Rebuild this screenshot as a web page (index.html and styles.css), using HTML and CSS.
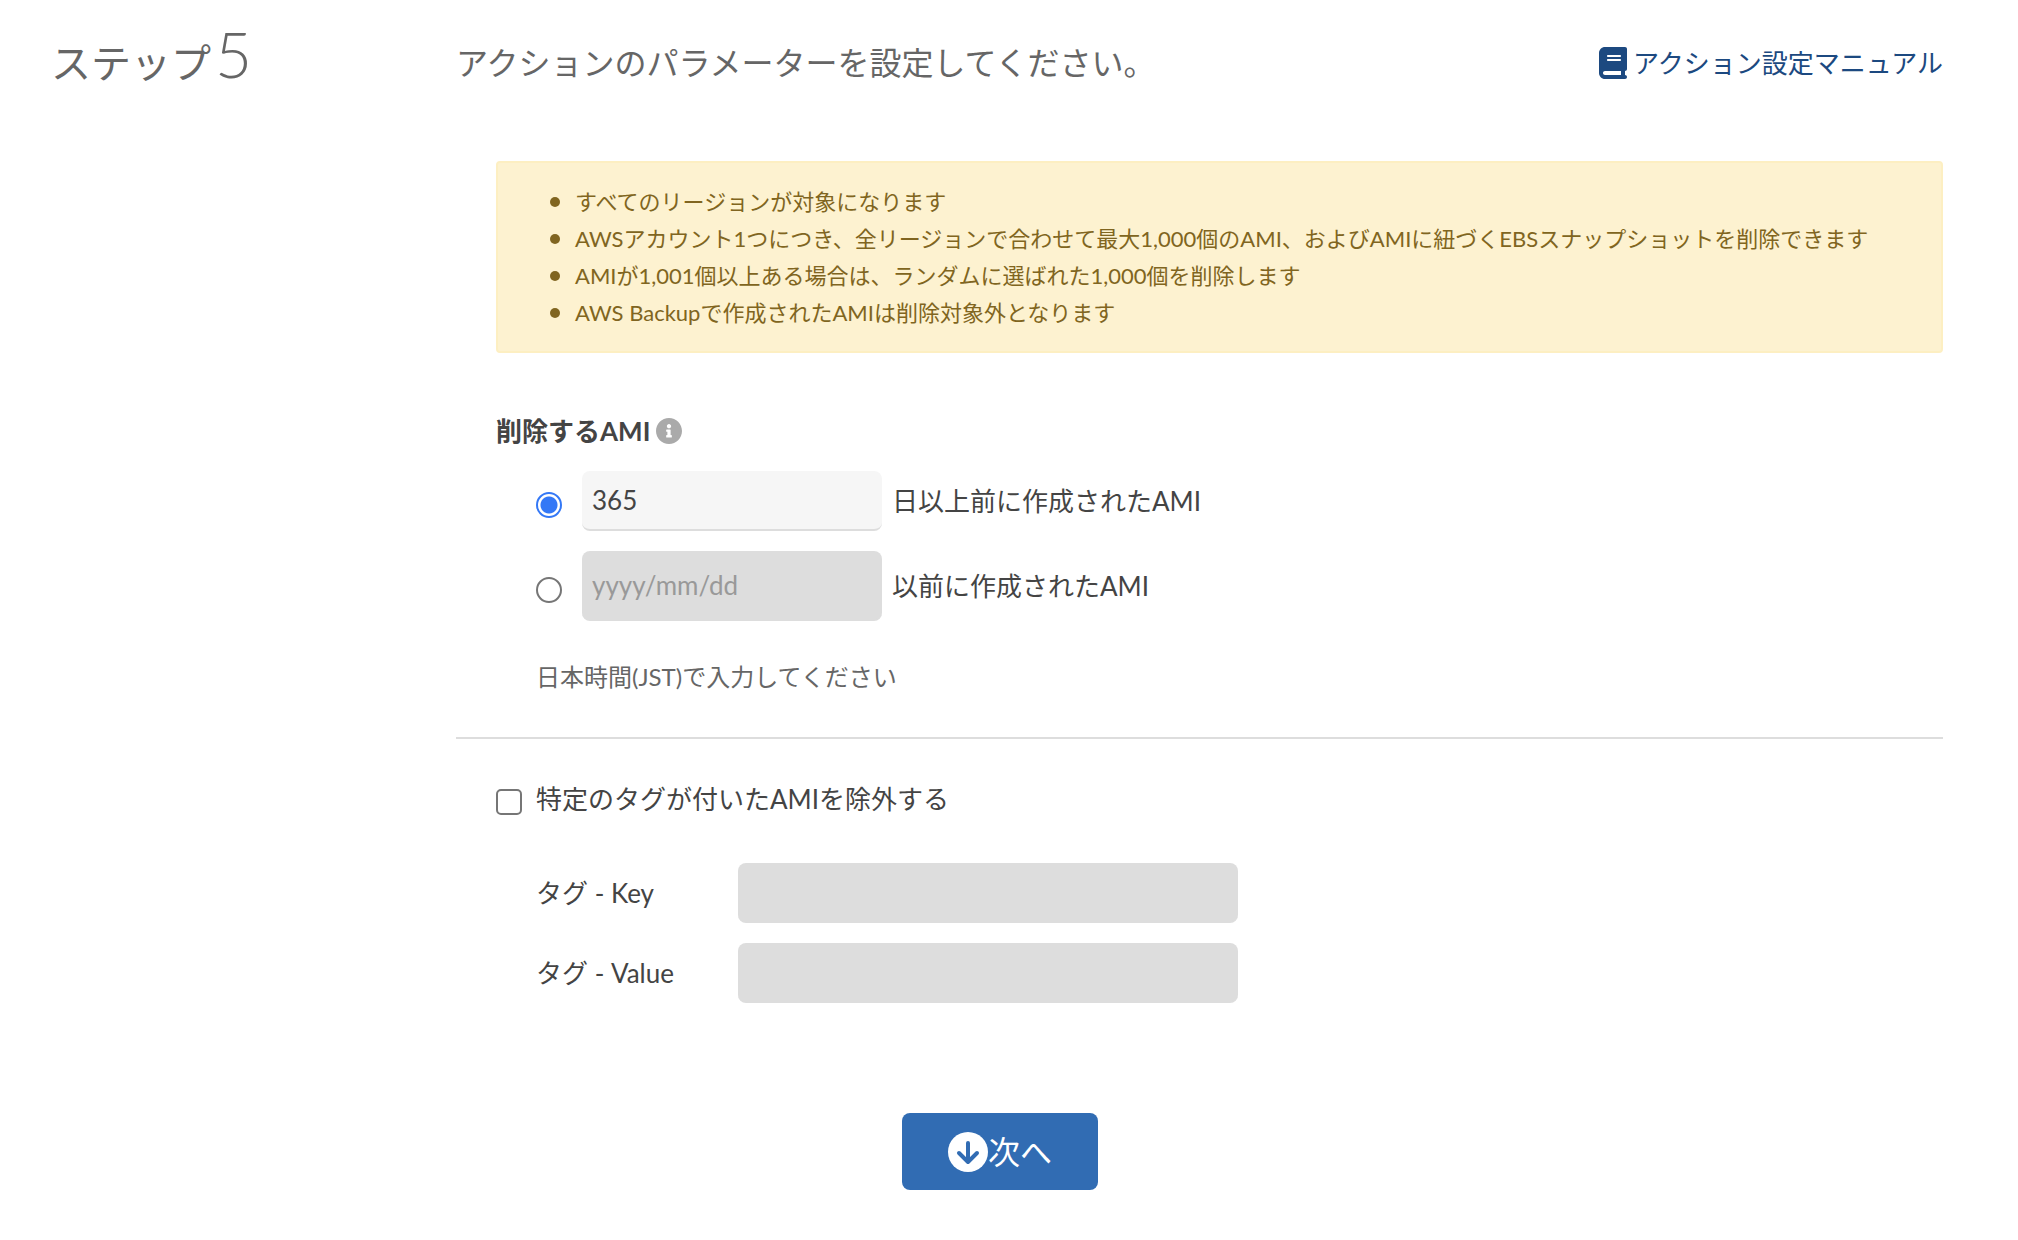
FILE: index.html
```html
<!DOCTYPE html>
<html lang="ja">
<head>
<meta charset="utf-8">
<title>アクション設定</title>
<link rel="stylesheet" href="styles.css">
</head>
<body>
<form class="step">
  <h2 class="step-name">ステップ<span class="step-number">5</span></h2>
  <section class="content">
    <header class="content-header">
      <h3 class="content-title">アクションのパラメーターを設定してください。</h3>
      <a class="manual-link" href="#">
        <svg class="book-icon" viewBox="0 0 448 512" aria-hidden="true"><path fill="currentColor" d="M96 0C43 0 0 43 0 96V416c0 53 43 96 96 96H416c18 0 32-14 32-32s-14-32-32-32V384c18 0 32-14 32-32V32c0-18-14-32-32-32H96zm0 384H352v64H96c-18 0-32-14-32-32s14-32 32-32zm32-240c0-9 7-16 16-16H336c9 0 16 7 16 16s-7 16-16 16H144c-9 0-16-7-16-16zm16 48H336c9 0 16 7 16 16s-7 16-16 16H144c-9 0-16-7-16-16s7-16 16-16z"/></svg>
        <span>アクション設定マニュアル</span>
      </a>
    </header>
    <ul class="notice">
      <li>すべてのリージョンが対象になります</li>
      <li>AWSアカウント1つにつき、全リージョンで合わせて最大1,000個のAMI、およびAMIに紐づくEBSスナップショットを削除できます</li>
      <li>AMIが1,001個以上ある場合は、ランダムに選ばれた1,000個を削除します</li>
      <li>AWS Backupで作成されたAMIは削除対象外となります</li>
    </ul>
    <div class="target">
      <h4 class="target-title">削除するAMI
        <svg class="info-icon" viewBox="0 0 512 512" aria-hidden="true"><path fill="currentColor" d="M256 0C115 0 0 115 0 256s115 256 256 256 256-115 256-256S397 0 256 0zm0 118c23 0 42 19 42 42s-19 42-42 42-42-19-42-42 19-42 42-42zm56 254c0 7-5 12-12 12h-88c-7 0-12-5-12-12v-24c0-7 5-12 12-12h12v-64h-12c-7 0-12-5-12-12v-24c0-7 5-12 12-12h64c7 0 12 5 12 12v100h12c7 0 12 5 12 12v24z"/></svg>
      </h4>
      <div class="option">
        <input class="check radio" type="radio" name="target" id="by-days" checked aria-label="日数で指定">
        <input class="field" type="text" id="days" value="365">
        <label for="days">日以上前に作成されたAMI</label>
      </div>
      <div class="option">
        <input class="check radio" type="radio" name="target" id="by-date" aria-label="日付で指定">
        <input class="field field-date" type="text" id="date" placeholder="yyyy/mm/dd" disabled>
        <label for="date">以前に作成されたAMI</label>
      </div>
      <p class="hint">日本時間(JST)で入力してください</p>
    </div>
    <hr class="divider">
    <div class="exclude">
      <div class="exclude-toggle">
        <input class="check checkbox" type="checkbox" id="exclude">
        <label for="exclude">特定のタグが付いたAMIを除外する</label>
      </div>
      <div class="tag-row">
        <label for="tag-key">タグ - Key</label>
        <input class="field" type="text" id="tag-key" disabled>
      </div>
      <div class="tag-row">
        <label for="tag-value">タグ - Value</label>
        <input class="field" type="text" id="tag-value" disabled>
      </div>
    </div>
  </section>
  <footer class="actions">
    <button class="next" type="button">
      <svg class="next-icon" viewBox="0 0 40 40" aria-hidden="true"><circle cx="20" cy="20" r="20" fill="#fff"/><path d="M20 11V29M11 21L20 30L29 21" fill="none" stroke="#316cb3" stroke-width="4" stroke-linecap="round" stroke-linejoin="round"/></svg>
      <span>次へ</span>
    </button>
  </footer>
</form>
</body>
</html>
```
FILE: styles.css
```css
* {
  box-sizing: border-box;
}

body {
  margin: 0;
  background: #fff;
  color: #444;
  font: 26px/38px Lato, "Noto Sans CJK JP", sans-serif;
}

h2, h3, h4, p, ul {
  margin: 0;
}

.step {
  display: grid;
  grid-template-columns: 405px 1fr;
  padding: 22px 75px 50px 51px;
}

.step-name {
  color: #666;
  font-size: 40px;
  font-weight: 400;
  line-height: 64px;
  white-space: nowrap;
}

.step-number {
  margin-left: 4px;
  font-size: 64px;
  font-weight: 300;
}

.content-header {
  display: flex;
  justify-content: space-between;
  align-items: center;
  height: 82px;
}

.content-title {
  color: #666;
  font-size: 32px;
  font-weight: 400;
}

.manual-link {
  display: flex;
  align-items: center;
  gap: 6px;
  color: #1c4980;
  text-decoration: none;
}

.book-icon {
  width: 28px;
  height: 32px;
}

.notice {
  margin: 57px 0 0 40px;
  padding: 20px 20px 20px 52px;
  border: 2px solid #fdefc2;
  border-radius: 4px;
  background: #fdf2d0;
  color: #806520;
  font-size: 22px;
  line-height: 37px;
  list-style: none;
}

.notice li {
  display: flex;
  align-items: center;
  gap: 15px;
}

.notice li::before {
  content: "";
  flex: none;
  width: 10px;
  height: 10px;
  border-radius: 50%;
  background: currentColor;
}

.target {
  padding: 59px 0 41px 40px;
}

.target-title {
  display: flex;
  align-items: center;
  gap: 6px;
  font-size: 26px;
  font-weight: 700;
}

.info-icon {
  width: 26px;
  height: 26px;
  color: #aaa;
}

.option {
  display: flex;
  align-items: center;
  margin: 20px 0 0 40px;
}

.target-title + .option {
  margin-top: 21px;
}

.check {
  flex: none;
  appearance: none;
  width: 26px;
  height: 26px;
  margin: 8px 0 0;
  border: 2px solid #767676;
  background: #fff;
}

.radio {
  margin-right: 20px;
  border-radius: 50%;
}

.radio:checked {
  border-color: #3478f6;
  background: radial-gradient(circle, #3478f6 8px, #fff 9px);
}

.checkbox {
  margin: 6px 14px 0 0;
  border-radius: 5px;
}

.field {
  width: 300px;
  height: 60px;
  padding: 0 10px;
  border: 0;
  border-bottom: 2px solid #ddd;
  border-radius: 8px;
  background: #f6f6f6;
  color: #444;
  font: inherit;
}

.field:disabled {
  background: #ddd;
}

.field::placeholder {
  color: #999;
}

.field-date {
  height: 70px;
}

.option label {
  margin-left: 10px;
}

.hint {
  margin: 37px 0 0 40px;
  color: #666;
  font-size: 24px;
}

.divider {
  margin: 0;
  border: 0;
  border-top: 2px solid #ddd;
}

.exclude {
  padding: 41px 0 0 40px;
}

.exclude-toggle {
  display: flex;
  align-items: center;
  margin-bottom: 45px;
}

.tag-row {
  display: grid;
  grid-template-columns: 202px 500px;
  align-items: center;
  margin: 0 0 20px 40px;
}

.tag-row .field {
  width: 100%;
}

.actions {
  grid-column: 1 / -1;
  display: flex;
  justify-content: center;
  padding: 90px 0 0 6px;
}

.next {
  display: flex;
  align-items: center;
  height: 77px;
  padding: 0 46px;
  border: 0;
  border-radius: 8px;
  background: #316cb3;
  color: #fff;
  font: inherit;
  font-size: 32px;
}

.next-icon {
  width: 40px;
  height: 40px;
}
```
